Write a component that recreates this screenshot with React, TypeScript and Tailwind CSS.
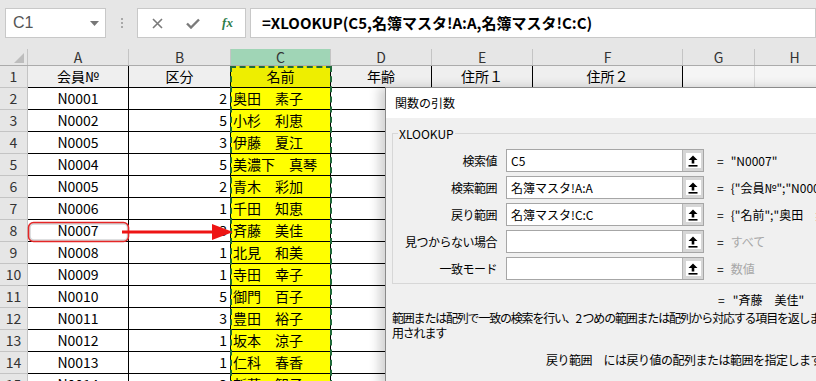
import React from 'react';

const rows: [string, string, string][] = [
  ['N0001', '2', '奥田　素子'],
  ['N0002', '5', '小杉　利恵'],
  ['N0005', '3', '伊藤　夏江'],
  ['N0004', '5', '美濃下　真琴'],
  ['N0005', '2', '青木　彩加'],
  ['N0006', '1', '千田　知恵'],
  ['N0007', '3', '斉藤　美佳'],
  ['N0008', '1', '北見　和美'],
  ['N0009', '1', '寺田　幸子'],
  ['N0010', '5', '御門　百子'],
  ['N0011', '3', '豊田　裕子'],
  ['N0012', '1', '坂本　涼子'],
  ['N0013', '1', '仁科　春香'],
  ['N0014', '3', '新藤　智子'],
];

const hdr = 'shrink-0 h-full flex items-center justify-center border-r border-[#c4c4c4] text-[14px] text-[#333]';

function RefButton() {
  return (
    <div className="w-[21px] h-full shrink-0 bg-[#d6d6d6] border-l border-[#b4b4b4] flex items-center justify-center">
      <div className="w-[15px] h-[15px] bg-white flex items-center justify-center">
        <svg width="10" height="12" viewBox="0 0 10 12">
          <path d="M5 0.5 L9.5 5 H6.3 V8.5 H3.7 V5 H0.5 Z" fill="#000" />
          <rect x="0.5" y="10" width="9" height="1.6" fill="#000" />
        </svg>
      </div>
    </div>
  );
}

function ArgRow({ label, value, result, gray }: { label: string; value: string; result: string; gray?: boolean }) {
  return (
    <div className="flex items-center h-[23px]">
      <div className="w-[104px] shrink-0 text-right tracking-[-0.5px]">{label}</div>
      <div className="ml-[9px] w-[198px] h-[23px] shrink-0 bg-white border border-[#a6a6a6] flex">
        <div className="flex-1 pl-[4px] leading-[21px] whitespace-nowrap">{value}</div>
        <RefButton />
      </div>
      <div className="ml-[13px] shrink-0">=</div>
      <div className={'ml-[7px] whitespace-nowrap ' + (gray ? 'text-[#a8a8a8]' : 'text-black')}>{result}</div>
    </div>
  );
}

export default function App() {
  return (
    <div className="relative w-[816px] h-[381px] overflow-hidden bg-[#e6e6e6] font-['Noto_Sans_CJK_JP',sans-serif] text-black">
      {/* formula bar */}
      <div className="h-[40px] flex items-start pt-[8px] pl-[5px]">
        <div className="w-[101px] h-[30px] bg-white border border-[#c8c8c8] flex items-center justify-between pl-[7px] pr-[6px]">
          <span className="text-[16px] text-[#555] font-['Liberation_Sans',sans-serif]">C1</span>
          <svg width="9" height="5" viewBox="0 0 9 5">
            <path d="M0 0 H9 L4.5 5 Z" fill="#777" />
          </svg>
        </div>
        <div className="w-[31px] h-[30px] flex flex-col items-center justify-center gap-[2px]">
          <div className="w-[2px] h-[2px] bg-[#a8a8a8]" />
          <div className="w-[2px] h-[2px] bg-[#a8a8a8]" />
          <div className="w-[2px] h-[2px] bg-[#a8a8a8]" />
        </div>
        <div className="w-[109px] h-[30px] bg-white border border-[#c8c8c8] flex items-center pl-[2px]">
          <div className="w-[36px] flex justify-center">
            <svg width="11" height="11" viewBox="0 0 11 11">
              <path d="M1 1 L10 10 M10 1 L1 10" stroke="#7a7a7a" strokeWidth="1.6" />
            </svg>
          </div>
          <div className="w-[36px] flex justify-center">
            <svg width="14" height="11" viewBox="0 0 14 11">
              <path d="M1 5.5 L5 9.5 L13 1.5" stroke="#7a7a7a" strokeWidth="2.4" fill="none" />
            </svg>
          </div>
          <div className="w-[36px] flex justify-center">
            <span className="font-['Liberation_Serif',serif] italic font-bold text-[13px] text-[#2e7d4a]">fx</span>
          </div>
        </div>
        <div className="ml-[4px] flex-1 h-[30px] bg-white border border-[#c8c8c8] flex items-center pl-[11px]">
          <span className="text-[15px] font-bold whitespace-nowrap">=XLOOKUP(C5,名簿マスタ!A:A,名簿マスタ!C:C)</span>
        </div>
      </div>
      <div className="h-[9px]" />
      {/* column header */}
      <div className="h-[17px] flex border-b border-[#ababab]">
        <div className="w-[28px] shrink-0 h-full border-r border-[#c4c4c4] flex items-end justify-end pr-[3px] pb-[2px]">
          <svg width="10" height="10" viewBox="0 0 10 10">
            <path d="M10 0 V10 H0 Z" fill="#bdbdbd" />
          </svg>
        </div>
        <div className={hdr + ' w-[101px]'}>A</div>
        <div className={hdr + ' w-[102px]'}>B</div>
        <div className={hdr + ' w-[100px] bg-[#a0d5b6]'}>C</div>
        <div className={hdr + ' w-[101px]'}>D</div>
        <div className={hdr + ' w-[101px]'}>E</div>
        <div className={hdr + ' w-[150px]'}>F</div>
        <div className={hdr + ' w-[72px]'}>G</div>
        <div className={hdr + ' w-[80px]'}>H</div>
      </div>
      {/* row 1 */}
      <div className="h-[22px] flex text-[14px]">
        <div className="w-[28px] shrink-0 bg-[#e6e6e6] border-r border-b border-[#c4c4c4] flex items-center justify-center text-[#333]">1</div>
        <div className="w-[101px] shrink-0 bg-[#efefef] border-r border-b border-black flex items-center justify-center">会員№</div>
        <div className="w-[102px] shrink-0 bg-[#efefef] border-r border-b border-black flex items-center justify-center">区分</div>
        <div className="w-[100px] shrink-0 bg-[#eeee00] border-r border-b border-black flex items-center justify-center">名前</div>
        <div className="w-[101px] shrink-0 bg-[#efefef] border-r border-b border-black flex items-center justify-center">年齢</div>
        <div className="w-[101px] shrink-0 bg-[#efefef] border-r border-b border-black flex items-center justify-center">住所１</div>
        <div className="w-[150px] shrink-0 bg-[#efefef] border-r border-b border-black flex items-center justify-center">住所２</div>
        <div className="w-[72px] shrink-0 bg-[#f5f5f5] border-r border-b border-[#d9d9d9]" />
        <div className="w-[80px] shrink-0 bg-[#f5f5f5] border-r border-b border-[#d9d9d9]" />
      </div>
      {rows.map((r, i) => (
        <div key={i} className="h-[22px] flex text-[14px] bg-white">
          <div className="w-[28px] shrink-0 bg-[#e6e6e6] border-r border-b border-[#c4c4c4] flex items-center justify-center text-[#333]">{i + 2}</div>
          <div className="w-[101px] shrink-0 border-r border-b border-black flex items-center justify-center">{r[0]}</div>
          <div className="w-[102px] shrink-0 border-r border-b border-black flex items-center justify-end pr-[3px]">{r[1]}</div>
          <div className="w-[100px] shrink-0 bg-[#ffff00] border-r border-b border-black flex items-center pl-[2px] whitespace-nowrap">{r[2]}</div>
          <div className="w-[101px] shrink-0 border-r border-b border-black" />
          <div className="w-[101px] shrink-0 border-r border-b border-black" />
          <div className="w-[150px] shrink-0 border-r border-b border-black" />
          <div className="w-[72px] shrink-0 border-r border-b border-[#d9d9d9]" />
          <div className="w-[80px] shrink-0 border-r border-b border-[#d9d9d9]" />
        </div>
      ))}

      {/* copy range marching ants */}
      <div className="absolute left-[230px] top-[66px] w-[102px] h-[330px] border-2 border-dashed border-[#1f6b3a] pointer-events-none" />

      {/* annotation */}
      <svg className="absolute left-0 top-0 pointer-events-none" width="816" height="381">
        <rect x="29.5" y="223.5" width="98.5" height="17" rx="4.5" fill="none" stroke="#d4d5d6" strokeWidth="2.5" />
        <rect x="28.5" y="222.5" width="100" height="19" rx="5" fill="none" stroke="#e52626" strokeWidth="1.5" />
        <line x1="122" y1="232" x2="215" y2="232" stroke="#ee1414" strokeWidth="3" />
        <polygon points="212,224 233,232 212,240" fill="#ee1414" />
      </svg>

      {/* dialog */}
      <div className="absolute left-[385px] top-[87px] w-[450px] h-[300px] bg-[#f0f0f0] border-l border-t border-[#8a8a8a] shadow-[-6px_0_10px_rgba(0,0,0,0.18)] text-[12px]">
        <div className="h-[30px] bg-white flex items-center pl-[9px]">関数の引数</div>
        <div className="px-[6px]">
          <fieldset className="mt-[7px] border border-[#d7d7d7] pb-[3px]">
            <legend className="ml-[5px] px-[1px] leading-[17px]">XLOOKUP</legend>
            <div className="pt-[7px] flex flex-col gap-[4px]">
              <ArgRow label="検索値" value="C5" result={'"N0007"'} />
              <ArgRow label="検索範囲" value="名簿マスタ!A:A" result={'{"会員№";"N0001";"N0002";"N0005"}'} />
              <ArgRow label="戻り範囲" value="名簿マスタ!C:C" result={'{"名前";"奥田　素子";"小杉　利恵"}'} />
              <ArgRow label="見つからない場合" value="" result="すべて" gray />
              <ArgRow label="一致モード" value="" result="数値" gray />
            </div>
          </fieldset>
          <div className="mt-[8px] ml-[326px] h-[16px] leading-[16px] whitespace-nowrap">=&nbsp;&nbsp;&nbsp;"斉藤　美佳"</div>
          <div className="mt-[2px] leading-[15px] whitespace-nowrap tracking-[-1.2px]">範囲または配列で一致の検索を行い、2 つめの範囲または配列から対応する項目を返します。既定では、完全一致が使</div>
          <div className="leading-[15px] whitespace-nowrap tracking-[-1.2px]">用されます</div>
          <div className="mt-[12px] ml-[154px] leading-[15px] whitespace-nowrap tracking-[-0.5px]">戻り範囲　には戻り値の配列または範囲を指定します</div>
        </div>
      </div>
    </div>
  );
}
